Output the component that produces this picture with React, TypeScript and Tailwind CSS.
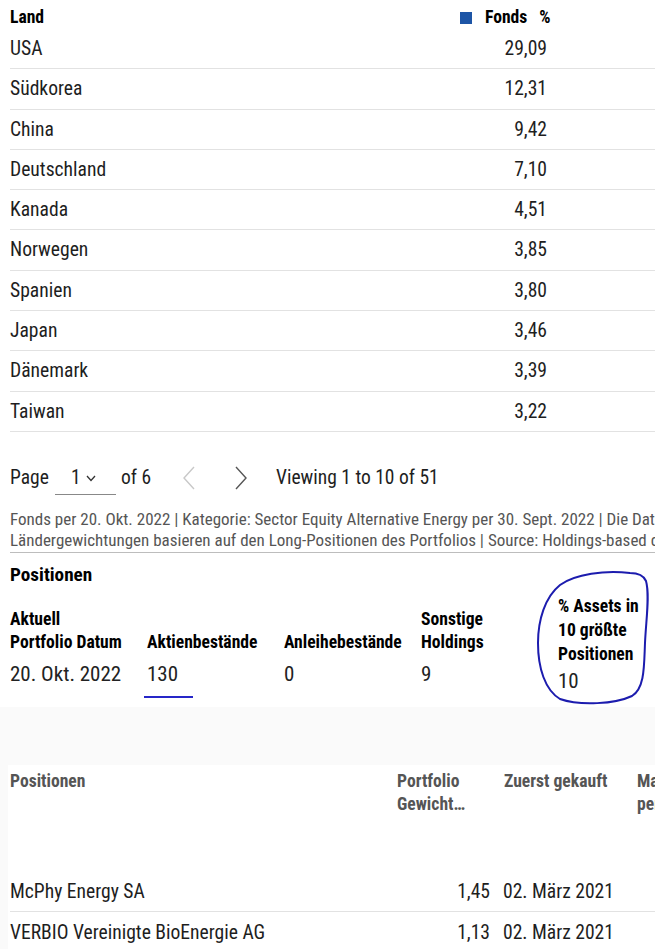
const countries = [
  { name: "USA", value: "29,09" },
  { name: "Südkorea", value: "12,31" },
  { name: "China", value: "9,42" },
  { name: "Deutschland", value: "7,10" },
  { name: "Kanada", value: "4,51" },
  { name: "Norwegen", value: "3,85" },
  { name: "Spanien", value: "3,80" },
  { name: "Japan", value: "3,46" },
  { name: "Dänemark", value: "3,39" },
  { name: "Taiwan", value: "3,22" },
]

const holdings = [
  { name: "McPhy Energy SA", weight: "1,45", date: "02. März 2021" },
  { name: "VERBIO Vereinigte BioEnergie AG", weight: "1,13", date: "02. März 2021" },
]

const stats = [
  { label: ["Aktuell", "Portfolio Datum"], value: "20. Okt. 2022" },
  { label: ["Aktienbestände"], value: "130" },
  { label: ["Anleihebestände"], value: "0" },
  { label: ["Sonstige", "Holdings"], value: "9" },
]

export default function App() {
  return (
    <div
      className="relative h-[949px] w-[655px] overflow-hidden bg-white text-[#1e1e1e]"
      style={{
        fontFamily: '"Roboto Condensed", "Liberation Sans Narrow", "DejaVu Sans Condensed", Roboto, sans-serif',
        fontStretch: "condensed",
      }}
    >
      {/* country table */}
      <div className="pl-[10px] pt-[1px]">
        <div className="flex h-[28px] items-center pt-[5px] text-[17.6px] font-bold text-black">
          <div className="flex-1">Land</div>
          <div className="flex w-[195px] items-center">
            <span className="mr-[13px] h-[12px] w-[12px] bg-[#1d55a6]" />
            <span>Fonds</span>
            <span className="ml-[12px]">%</span>
          </div>
        </div>
        {countries.map((c) => (
          <div key={c.name} className="flex h-[40.3px] items-center border-b border-[#e2e2e2] text-[19.6px]">
            <div className="flex-1">{c.name}</div>
            <div className="w-[100px] text-right">{c.value}</div>
            <div className="w-[108px]" />
          </div>
        ))}
      </div>

      {/* pagination */}
      <div className="mt-[28px] flex h-[36px] items-center pl-[10px] text-[19.5px]">
        <span className="w-[45px] shrink-0">Page</span>
        <div className="flex h-[34px] w-[61px] shrink-0 items-center border-b border-[#888] pl-[16px]">
          <span>1</span>
          <svg className="ml-[5px] mt-[2px]" width="10" height="7" viewBox="0 0 10 7" fill="none">
            <path d="M1 1l4 4.5L9 1" stroke="#333" strokeWidth="1.3" />
          </svg>
        </div>
        <span className="ml-[5px]">of 6</span>
        <svg className="ml-[31px] shrink-0" width="14" height="26" viewBox="0 0 14 26" fill="none">
          <path d="M12 2L2 13l10 11" stroke="#c8c8c8" strokeWidth="1.4" />
        </svg>
        <svg className="ml-[38px] shrink-0" width="14" height="26" viewBox="0 0 14 26" fill="none">
          <path d="M2 2l10 11L2 24" stroke="#555" strokeWidth="1.4" />
        </svg>
        <span className="ml-[28px]">Viewing 1 to 10 of 51</span>
      </div>

      {/* footnote */}
      <div className="ml-[10px] mt-[13px] whitespace-nowrap border-b border-[#bdbdbd] pb-[1px] text-[17px] leading-[21px] text-[#555]">
        <div>Fonds per 20. Okt. 2022 | Kategorie: Sector Equity Alternative Energy per 30. Sept. 2022 | Die Daten basieren auf</div>
        <div>Ländergewichtungen basieren auf den Long-Positionen des Portfolios | Source: Holdings-based calculations</div>
      </div>

      {/* positions summary */}
      <div className="pl-[10px]">
        <div className="mt-[10px] text-[19.2px] font-bold leading-[24px] text-black">Positionen</div>
        <div className="mt-[7px] flex items-end text-[17.6px] font-bold text-black">
          {stats.map((s) => (
            <div key={s.value} className="w-[137px] shrink-0 leading-[23px]">
              {s.label.map((l) => (
                <div key={l} className="whitespace-nowrap">{l}</div>
              ))}
              <div className="mt-[7px] text-[21px] font-normal leading-[26px] text-[#222]">{s.value}</div>
            </div>
          ))}
          <div className="mb-[-7px] w-[90px] shrink-0 leading-[24px]">
            <div className="whitespace-nowrap">% Assets in</div>
            <div>10 größte</div>
            <div>Positionen</div>
            <div className="mt-[2px] text-[21px] font-normal leading-[26px] text-[#222]">10</div>
          </div>
        </div>
      </div>

      {/* holdings table */}
      <div className="mt-[20px] bg-[#fafafa] pl-[8px] pt-[58px]">
        <div className="h-[200px] bg-white pl-[2px]">
          <div className="flex h-[106.5px] pt-[5px] text-[17.6px] font-bold leading-[23px] text-[#555]">
            <div className="w-[387px] shrink-0">Positionen</div>
            <div className="w-[107px] shrink-0">
              <div>Portfolio</div>
              <div>Gewicht…</div>
            </div>
            <div className="w-[133px] shrink-0 whitespace-nowrap">Zuerst gekauft</div>
            <div className="shrink-0 whitespace-nowrap">
              <div>Markt</div>
              <div>per</div>
            </div>
          </div>
          {holdings.map((h) => (
            <div key={h.name} className="flex h-[41px] items-center whitespace-nowrap border-b border-[#e2e2e2] text-[19.6px]">
              <div className="w-[430px] shrink-0">{h.name}</div>
              <div className="w-[50px] shrink-0 text-right">{h.weight}</div>
              <div className="ml-[13px]">{h.date}</div>
            </div>
          ))}
        </div>
      </div>

      {/* hand-drawn annotations */}
      <svg className="pointer-events-none absolute left-0 top-0" width="655" height="949" viewBox="0 0 655 949" fill="none">
        <path d="M144 697 L193 697" stroke="#2626c8" strokeWidth="2" />
        <path
          d="M630 573 C605 570 575 574 560 585 C545 597 538 620 538 643 C538 668 545 690 560 699 C580 706 615 704 632 696 C645 688 644 665 645 643 C646 620 650 595 646 581 C643 574 636 573 630 573 Z"
          stroke="#1c1cae"
          strokeWidth="2"
        />
      </svg>
    </div>
  )
}
